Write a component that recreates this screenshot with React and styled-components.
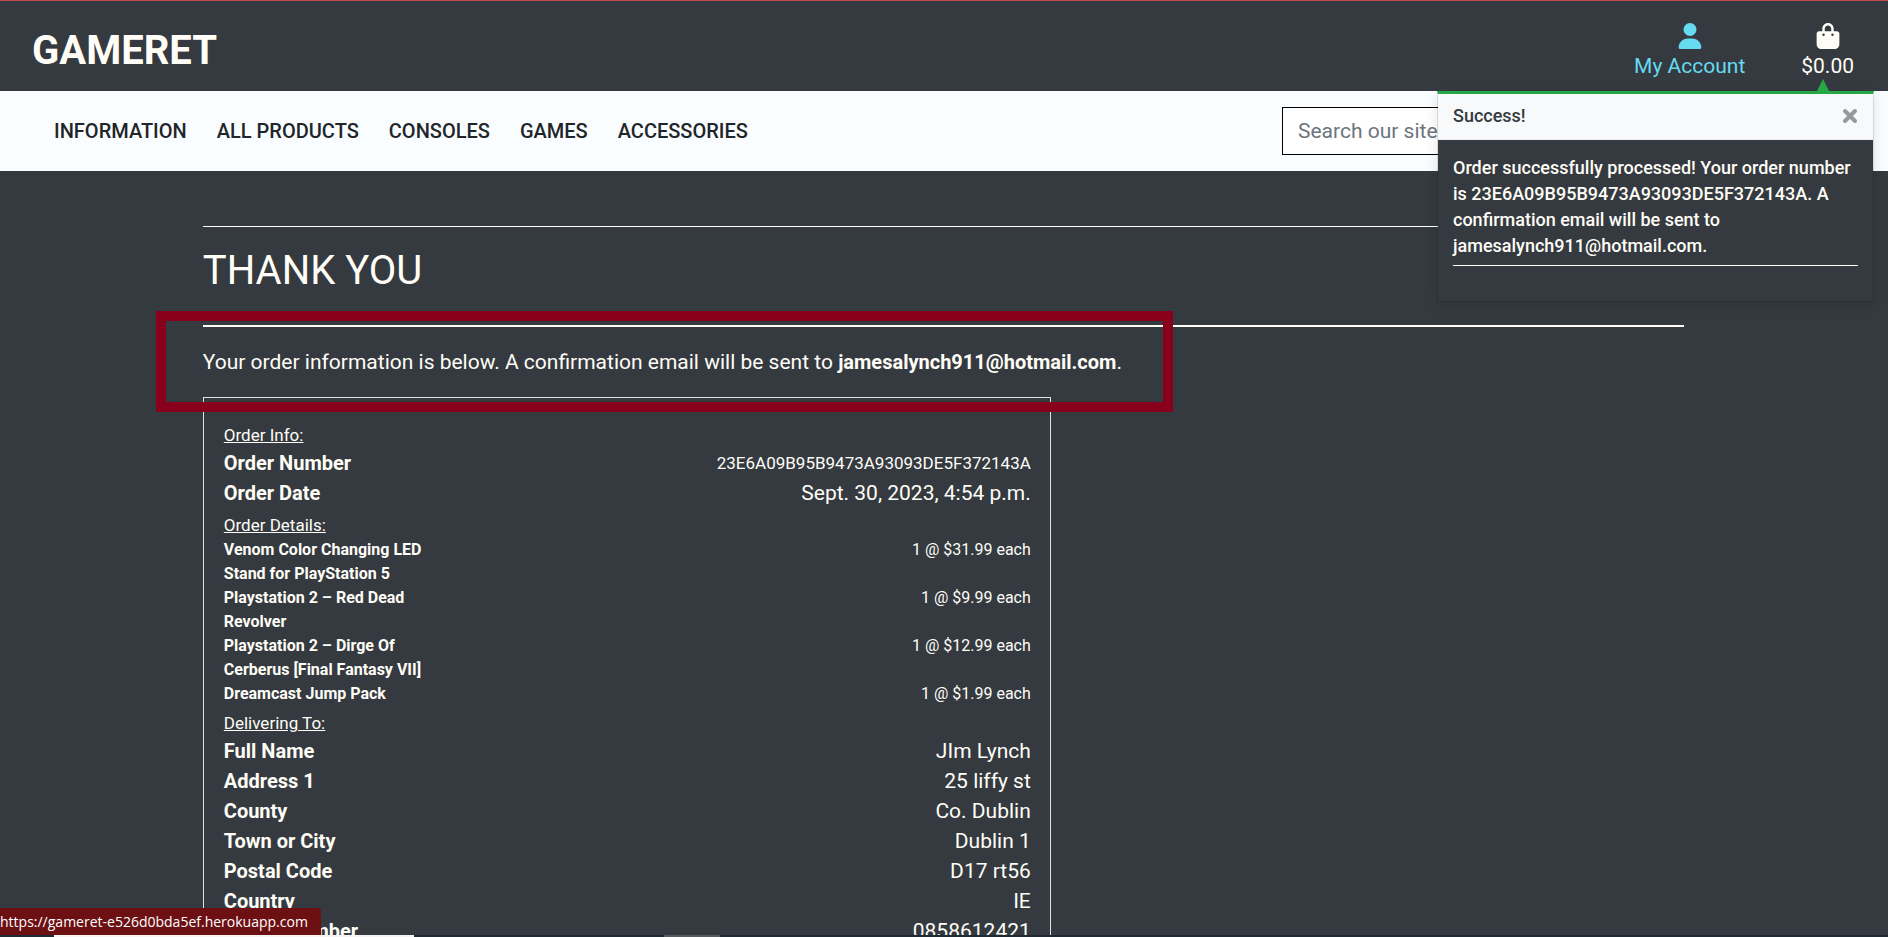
import React from "react";
import styled, { createGlobalStyle } from "styled-components";
import { FaUser, FaBagShopping } from "react-icons/fa6";

const ink = "#fffdf6";
const dark = "#343a40";

const GlobalStyle = createGlobalStyle`
  *, *::before, *::after { box-sizing: border-box; }
  body {
    margin: 0;
    background: ${dark};
    color: ${ink};
    font-family: Roboto, "Liberation Sans", sans-serif;
    font-size: 21px;
    line-height: 30px;
  }
  h1, h2, p, dl, dt, dd, ul { margin: 0; padding: 0; }
  a { color: inherit; text-decoration: none; }
`;

const Page = styled.div`
  position: relative;
  height: 100vh;
  overflow: hidden;
`;

const Header = styled.header`
  display: flex;
  justify-content: space-between;
  align-items: center;
  height: 91px;
  padding: 10px 34px 0 32px;
  border-top: 1px solid #c14a4f;
`;

const Logo = styled.a`
  font-size: 40px;
  line-height: 52px;
  font-weight: 700;
`;

const Tools = styled.div`
  display: flex;
  gap: 56px;
  padding-top: 2px;
`;

const Tool = styled.a`
  display: flex;
  flex-direction: column;
  align-items: center;
  gap: 2px;
  color: ${(p) => (p.$active ? "#66dbf0" : ink)};
  svg { display: block; }
`;

const NavBar = styled.nav`
  display: flex;
  justify-content: space-between;
  align-items: center;
  height: 80px;
  padding: 0 54px;
  background: #f9fdff;
  color: #212529;
`;

const Links = styled.ul`
  display: flex;
  gap: 30px;
  list-style: none;
  font-size: 20px;
  font-weight: 500;
`;

const Search = styled.input`
  appearance: none;
  width: 552px;
  height: 48px;
  padding: 0 15px;
  border: 1px solid #000;
  border-radius: 0;
  background: #fff;
  font: inherit;
  &::placeholder { color: #6c757d; opacity: 1; }
`;

const Main = styled.main`
  width: 80%;
  margin: 0 auto;
  padding: 55px 15px 0 14px;
`;

const Rule = styled.hr`
  margin: 0;
  border: 0;
  border-top: ${(p) => p.$weight || 1}px solid ${ink};
`;

const Title = styled.h2`
  padding: 20px 0 30px;
  font-size: 40px;
  line-height: 48px;
  font-weight: 400;
`;

const Notice = styled.p`
  position: relative;
  width: fit-content;
  padding: 20px 0;
  strong { font-size: 20px; }
`;

const Highlight = styled.span`
  position: absolute;
  inset: -16px -51px -15px -47px;
  border: 10px solid #88001b;
  pointer-events: none;
`;

const OrderBox = styled.section`
  width: 848px;
  max-width: 100%;
  padding: 20px 19px 20px 20px;
  border: 1px solid #dee2e6;
`;

const GroupTitle = styled.p`
  padding: 5px 0 1px;
  font-size: 17px;
  line-height: 24px;
  text-decoration: underline;
`;

const Rows = styled.dl`
  font-size: ${(p) => (p.$small ? 16 : 21)}px;
  line-height: ${(p) => (p.$small ? 24 : 30)}px;
`;

const Row = styled.div`
  display: flex;
  justify-content: space-between;
  dt {
    width: 212px;
    font-size: ${(p) => (p.$small ? 16 : 20)}px;
    font-weight: 700;
  }
  dd { text-align: right; font-size: ${(p) => (p.$fine ? "17px" : "inherit")}; }
`;

const Toast = styled.aside`
  position: absolute;
  top: 91px;
  right: 14px;
  width: 437px;
  background: ${dark};
  background-clip: padding-box;
  border: 1px solid rgba(0, 0, 0, 0.1);
  border-top: 3px solid #28a745;
  box-shadow: 0 4px 12px rgba(0, 0, 0, 0.1);
  font-size: 18px;
  line-height: 26px;
  font-weight: 500;
`;

const Arrow = styled.span`
  position: absolute;
  top: -15px;
  right: 44px;
  border: 6px solid transparent;
  border-top: 0;
  border-bottom: 12px solid #28a745;
`;

const ToastHead = styled.div`
  display: flex;
  justify-content: space-between;
  align-items: center;
  height: 46px;
  padding: 0 15px 2px;
  background: #f8f9fa;
  border-bottom: 1px solid #ecedee;
  color: ${dark};
`;

const Close = styled.button`
  padding: 0;
  border: 0;
  background: none;
  color: #96989b;
  svg { display: block; }
`;

const ToastBody = styled.div`
  padding: 15px 15px 35px;
  p { padding-bottom: 6px; }
`;

const StatusLink = styled.div`
  position: absolute;
  left: 0;
  bottom: 2px;
  height: 27px;
  width: 321px;
  border-top-right-radius: 4px;
  background: #6d1013;
  color: #fff;
  font: 14px/27px "Open Sans", "Noto Sans", sans-serif;
`;

const Taskbar = styled.div`
  position: absolute;
  left: 0;
  right: 0;
  bottom: 0;
  display: flex;
  gap: 250px;
  height: 2px;
  padding-left: 54px;
  background: #1e2b33;
`;

const TaskSlot = styled.span`
  width: ${(p) => p.$width}px;
  background: ${(p) => p.$color};
`;

const links = ["INFORMATION", "ALL PRODUCTS", "CONSOLES", "GAMES", "ACCESSORIES"];

const info = [
  ["Order Number", "23E6A09B95B9473A93093DE5F372143A", true],
  ["Order Date", "Sept. 30, 2023, 4:54 p.m."],
];

const items = [
  ["Venom Color Changing LED Stand for PlayStation 5", "1 @ $31.99 each"],
  ["Playstation 2 – Red Dead Revolver", "1 @ $9.99 each"],
  ["Playstation 2 – Dirge Of Cerberus [Final Fantasy VII]", "1 @ $12.99 each"],
  ["Dreamcast Jump Pack", "1 @ $1.99 each"],
];

const delivery = [
  ["Full Name", "JIm Lynch"],
  ["Address 1", "25 liffy st"],
  ["County", "Co. Dublin"],
  ["Town or City", "Dublin 1"],
  ["Postal Code", "D17 rt56"],
  ["Country", "IE"],
  ["Phone Number", "0858612421"],
];

function Group({ title, rows, small }) {
  return (
    <>
      <GroupTitle>{title}</GroupTitle>
      <Rows $small={small}>
        {rows.map(([name, value, fine]) => (
          <Row key={name} $fine={fine} $small={small}>
            <dt>{name}</dt>
            <dd>{value}</dd>
          </Row>
        ))}
      </Rows>
    </>
  );
}

export default function App() {
  return (
    <Page>
      <GlobalStyle />
      <Header>
        <Logo href="#home">GAMERET</Logo>
        <Tools>
          <Tool href="#account" $active>
            <FaUser size={26} />
            My Account
          </Tool>
          <Tool href="#bag">
            <FaBagShopping size={26} />
            $0.00
          </Tool>
        </Tools>
      </Header>
      <NavBar>
        <Links>
          {links.map((label) => (
            <li key={label}>
              <a href="#shop">{label}</a>
            </li>
          ))}
        </Links>
        <Search type="search" aria-label="Search our site" placeholder="Search our site" />
      </NavBar>
      <Main>
        <Rule />
        <Title>THANK YOU</Title>
        <Rule $weight={2} />
        <Notice>
          Your order information is below. A confirmation email will be sent to{" "}
          <strong>jamesalynch911@hotmail.com</strong>.
          <Highlight />
        </Notice>
        <OrderBox>
          <Group title="Order Info:" rows={info} />
          <Group title="Order Details:" rows={items} small />
          <Group title="Delivering To:" rows={delivery} />
        </OrderBox>
      </Main>
      <Toast role="status">
        <Arrow />
        <ToastHead>
          Success!
          <Close type="button" aria-label="Close">
            <svg
              width="16"
              height="16"
              viewBox="0 0 16 16"
              stroke="currentColor"
              strokeWidth="4"
              strokeLinecap="round"
            >
              <path d="M3 3L13 13M13 3L3 13" />
            </svg>
          </Close>
        </ToastHead>
        <ToastBody>
          <p>
            Order successfully processed! Your order number is 23E6A09B95B9473A93093DE5F372143A. A
            confirmation email will be sent to jamesalynch911@hotmail.com.
          </p>
          <Rule />
        </ToastBody>
      </Toast>
      <StatusLink>https://gameret-e526d0bda5ef.herokuapp.com</StatusLink>
      <Taskbar>
        <TaskSlot $width={360} $color="#f6f3f4" />
        <TaskSlot $width={56} $color="#555b61" />
      </Taskbar>
    </Page>
  );
}
